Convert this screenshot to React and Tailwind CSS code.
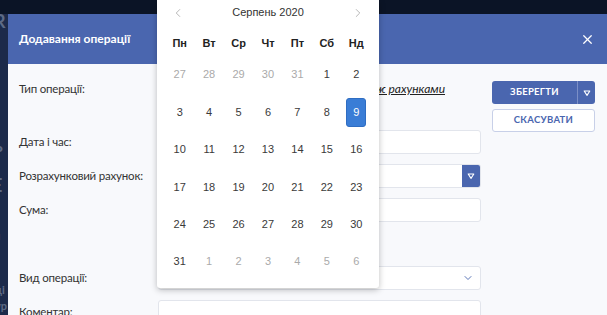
import { X, ChevronDown, ChevronLeft, ChevronRight } from "lucide-react";

const labelFont = { fontFamily: "Lato, 'Noto Sans', sans-serif" };

const weeks = [
  [[27, 0], [28, 0], [29, 0], [30, 0], [31, 0], [1, 1], [2, 1]],
  [[3, 1], [4, 1], [5, 1], [6, 1], [7, 1], [8, 1], [9, 2]],
  [[10, 1], [11, 1], [12, 1], [13, 1], [14, 1], [15, 1], [16, 1]],
  [[17, 1], [18, 1], [19, 1], [20, 1], [21, 1], [22, 1], [23, 1]],
  [[24, 1], [25, 1], [26, 1], [27, 1], [28, 1], [29, 1], [30, 1]],
  [[31, 1], [1, 0], [2, 0], [3, 0], [4, 0], [5, 0], [6, 0]],
];

function TriangleDown({ className }) {
  return (
    <svg viewBox="0 0 10 10" className={className} fill="none" stroke="currentColor" strokeWidth="1.4">
      <path d="M1.5 2.5h7L5 8z" strokeLinejoin="round" />
    </svg>
  );
}

function Field({ label, children, mt }) {
  return (
    <div className={`flex items-center ${mt}`}>
      <div className="w-[139px] shrink-0 whitespace-nowrap text-[11.5px] tracking-[-0.2px] text-[#333]">{label}</div>
      <div className="w-[323px]">{children}</div>
    </div>
  );
}

function Input() {
  return <div className="h-[24px] rounded-[3px] border border-[#e2e5ec] bg-white" />;
}

function Calendar() {
  return (
    <div
      className="absolute left-[157px] top-0 w-[222px] h-[288px] bg-white rounded-b-[3px] shadow-[0_2px_6px_rgba(0,0,0,0.25)] px-[8px]"
      style={{ fontFamily: "'Liberation Sans', Arial, sans-serif" }}
    >
      <div className="h-[25px] flex items-center justify-between px-[6px] text-[#999]">
        <ChevronLeft className="w-[14px] h-[14px]" strokeWidth={1.2} />
        <span className="text-[11px] text-[#333]">Серпень 2020</span>
        <ChevronRight className="w-[14px] h-[14px]" strokeWidth={1.2} />
      </div>
      <div className="mt-[6px] h-[24px] grid grid-cols-7 items-center text-center text-[11px] font-bold text-[#222]">
        {["Пн", "Вт", "Ср", "Чт", "Пт", "Сб", "Нд"].map((d) => (
          <span key={d}>{d}</span>
        ))}
      </div>
      <div className="mt-[1px]">
        {weeks.map((w, i) => (
          <div key={i} className="h-[37.4px] grid grid-cols-7 items-center text-center text-[11px]">
            {w.map(([n, t], j) =>
              t === 2 ? (
                <div key={j} className="flex justify-center">
                  <span className="w-[20px] h-[29px] flex items-center justify-center rounded-[3px] bg-[#3a7dd6] border border-[#2f6dc2] text-white">
                    {n}
                  </span>
                </div>
              ) : (
                <span key={j} className={t ? "text-[#3a3a3a]" : "text-[#aaa]"}>
                  {n}
                </span>
              )
            )}
          </div>
        ))}
      </div>
    </div>
  );
}

export default function App() {
  return (
    <div className="relative w-[607px] h-[315px] overflow-hidden bg-[#0b1426]" style={labelFont}>
      {/* page behind the modal */}
      <div className="absolute left-0 top-[14px] w-[8px] bottom-0 bg-[#1c2a4a] overflow-hidden text-[#5d6a85] font-bold">
        <div className="absolute left-[-6px] top-[-6px] text-[18px]">R</div>
        <div className="absolute left-[-6px] top-[118px] text-[18px]">ь</div>
        <div className="absolute left-[-8px] top-[158px] text-[18px]">Е</div>
        <div className="absolute left-[-6px] top-[214px] text-[11px]">и</div>
        <div className="absolute left-[-5px] top-[268px] text-[11px]">ді</div>
        <div className="absolute left-[-5px] top-[284px] text-[11px]">ур</div>
        <div className="absolute left-[1px] top-[298px] text-[9px]">з</div>
      </div>

      {/* modal */}
      <div className="absolute left-[8px] top-[14px] w-[599px] bottom-0 bg-[#f8f9fc]">
        <div className="h-[50px] bg-[#4a66af] flex items-center justify-between pl-[11px] pr-[12px]">
          <h2 className="text-white font-bold text-[12px]">Додавання операції</h2>
          <X className="w-[15px] h-[15px] text-white" strokeWidth={2} />
        </div>

        <div className="flex pl-[11px] gap-[11px]">
          <div>
            <div className="flex items-center mt-[16px] h-[18px]">
              <div className="w-[139px] shrink-0 text-[11.5px] tracking-[-0.2px] text-[#333]">Тип операції:</div>
              <div className="w-[323px] flex justify-end pr-[36px] gap-[16px] text-[12px] italic text-[#222]">
                <span className="underline">Надходження</span>
                <span className="underline">Переказ між рахунками</span>
              </div>
            </div>

            <Field label="Дата і час:" mt="mt-[32px]">
              <Input />
            </Field>

            <Field label="Розрахунковий рахунок:" mt="mt-[10px]">
              <div className="h-[24px] flex rounded-[3px] border border-[#e2e5ec] bg-white overflow-hidden">
                <div className="flex-1" />
                <div className="w-[18px] bg-[#4a66af] flex items-center justify-center text-white">
                  <TriangleDown className="w-[8px] h-[8px]" />
                </div>
              </div>
            </Field>

            <Field label="Сума:" mt="mt-[10px]">
              <Input />
            </Field>

            <Field label="Вид операції:" mt="mt-[44px]">
              <div className="h-[24px] flex items-center justify-end pr-[6px] rounded-[3px] border border-[#e2e5ec] bg-white">
                <ChevronDown className="w-[12px] h-[12px] text-[#4a66af]" strokeWidth={1.8} />
              </div>
            </Field>

            <Field label="Коментар:" mt="mt-[10px]">
              <Input />
            </Field>
          </div>

          <div className="w-[103px] mt-[17px] flex flex-col gap-[5px]">
            <div className="h-[23px] flex rounded-[3px] bg-[#4a66af] text-white">
              <div className="flex-1 flex items-center justify-center text-[9.5px] font-bold tracking-[0.3px]">ЗБЕРЕГТИ</div>
              <div className="w-[18px] border-l border-[#7b8fc7] flex items-center justify-center">
                <TriangleDown className="w-[8px] h-[8px]" />
              </div>
            </div>
            <div className="h-[23px] flex items-center justify-center rounded-[3px] border border-[#c8d0e8] bg-white text-[#4a66af] text-[9.5px] font-bold tracking-[0.3px]">
              СКАСУВАТИ
            </div>
          </div>
        </div>
      </div>

      <Calendar />
    </div>
  );
}
